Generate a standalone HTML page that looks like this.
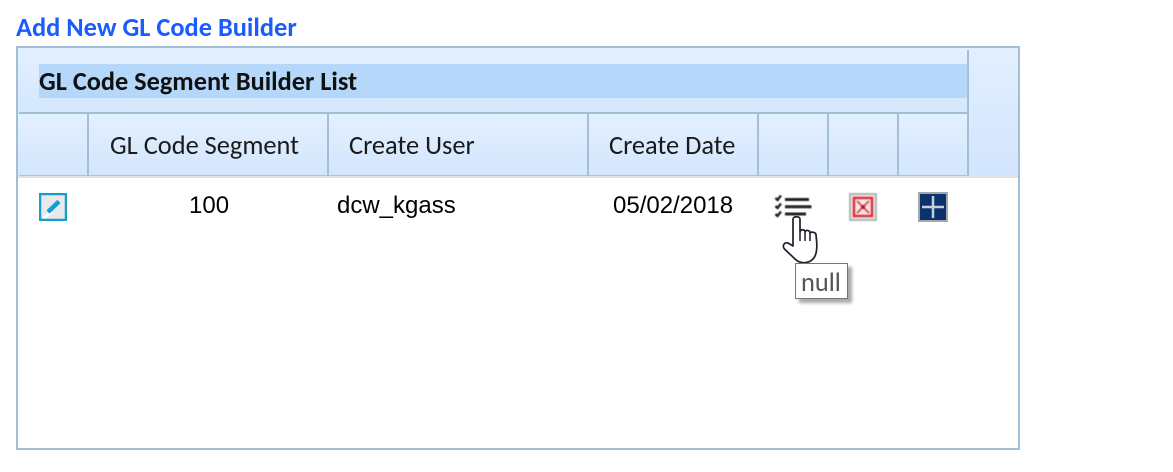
<!DOCTYPE html>
<html><head><meta charset="utf-8">
<style>
html,body{margin:0;padding:0;background:#fff;width:1173px;height:472px;overflow:hidden}
body{position:relative;font-family:"Carlito","Liberation Sans",sans-serif}
.a{position:absolute}
.t{position:absolute;white-space:nowrap;line-height:1}
.v{position:absolute;background:#a3bfd6;width:2px;top:113px;height:63px}
.h{font-size:26.4px;color:#1a1a1a;top:133px}
.c{font-family:"Liberation Sans",sans-serif;font-size:24px;color:#000;top:194px}
</style></head><body>
<div class="t" style="left:16px;top:15px;font-size:26.400px;font-weight:bold;color:#1a5cff">Add New GL Code Builder</div>

<div class="a" style="left:16px;top:46px;width:1000px;height:400px;border:2px solid #a3bfd6;background:#fff"></div>
<div class="a" style="left:18px;top:48px;width:1000px;height:128px;background:linear-gradient(#e2efff,#d2e5fd)"></div>
<div class="a" style="left:18px;top:48px;width:950px;height:64px;background:linear-gradient(#e3f0ff,#d5e7fe)"></div>
<div class="a" style="left:18px;top:114px;width:950px;height:61px;background:linear-gradient(#e3f0ff,#d3e6fd)"></div>
<div class="a" style="left:18px;top:176px;width:1000px;height:2px;background:#e0e0e0"></div>

<div class="a" style="left:39px;top:64px;width:928px;height:34px;background:#b4d7fa"></div>
<div class="t" style="left:39px;top:69px;font-size:26.300px;font-weight:bold;color:#111">GL Code Segment Builder List</div>

<div class="a" style="left:967px;top:50px;width:2px;height:126px;background:#a3bfd6"></div>
<div class="a" style="left:19px;top:112px;width:949px;height:2px;background:#a3bfd6"></div>
<div class="a" style="left:19px;top:175px;width:949px;height:1px;background:#a9c5dc"></div>
<div class="v" style="left:87px"></div>
<div class="v" style="left:327px"></div>
<div class="v" style="left:587px"></div>
<div class="v" style="left:757px"></div>
<div class="v" style="left:827px"></div>
<div class="v" style="left:897px"></div>

<div class="t h" style="left:110px">GL Code Segment</div>
<div class="t h" style="left:349px">Create User</div>
<div class="t h" style="left:609px">Create Date</div>

<div class="t c" style="left:189px">100</div>
<div class="t c" style="left:337px">dcw_kgass</div>
<div class="t c" style="left:613px">05/02/2018</div>

<svg class="a" style="left:39px;top:193px" width="28" height="28" viewBox="0 0 28 28">
<rect x="1" y="1" width="26" height="26" fill="#e9e9e9" stroke="#12a0cc" stroke-width="2.500"/>
<path d="M3 25 L11 18 L14 20 L7 25 Z" fill="#fff"/>
<path d="M9 19 L20 8.500" stroke="#10a0d8" stroke-width="4.500" fill="none" style="filter:blur(.3px)"/>
</svg>

<svg class="a" style="left:772px;top:192px;filter:blur(.6px)" width="42" height="30" viewBox="0 0 42 30">
<g fill="none" stroke="#222" stroke-linecap="butt">
<path d="M3.500 6 L5.500 8 L9 3.500" stroke-width="2.400"/>
<path d="M3.500 14 L5.500 16 L9 11.500" stroke-width="2.400"/>
<path d="M3.500 22 L5.500 24 L9 19.500" stroke-width="2.400"/>
<path d="M13 7.500 H37" stroke-width="3"/>
<path d="M13 14.700 H39.500" stroke-width="3"/>
<path d="M13 22 H34" stroke-width="3"/>
</g>
</svg>

<svg class="a" style="left:849px;top:193px;filter:blur(.4px)" width="28" height="28" viewBox="0 0 28 28">
<rect x="0" y="0" width="28" height="28" fill="#b5b5b5"/>
<rect x="2" y="2" width="24" height="24" fill="#e6e6e6"/>
<rect x="5" y="5" width="18" height="18" fill="#f3e6e6" stroke="#dc3038" stroke-width="2.400"/>
<path d="M8 8 L20 20 M20 8 L8 20" stroke="#e0494d" stroke-width="1.800"/>
<circle cx="14" cy="14" r="2" fill="#c91018"/>
</svg>

<svg class="a" style="left:918px;top:192px;filter:blur(.3px)" width="30" height="30" viewBox="0 0 30 30">
<rect width="30" height="30" fill="#a3a8ae"/>
<rect x="2" y="2" width="26" height="26" fill="#0c326b"/>
<path d="M15 4 V26 M4 15 H26" stroke="#c2cfdf" stroke-width="2.500"/>
</svg>

<svg class="a" style="left:780px;top:214px" width="42" height="52" viewBox="0 0 42 52">
<path d="M13 25 V5 C13 2 20 2 20 5 V18 C20.500 15 25 15 25 18 C25.500 15.500 30 16 30 19 C31 17.500 36 18 36 21 C37 29 38 40 33 45 C28 50 20 50 15 45 L4.500 35 C2 32 4 28 8 29 L13 32 Z" fill="#fff" stroke="#1c2028" stroke-width="1.700" stroke-linejoin="round"/>
<path d="M20 18 V27 M25 18 V27 M30 19 V27" stroke="#1c2028" stroke-width="1.500" fill="none"/>
</svg>

<div class="a" style="left:795px;top:263px;width:51px;height:34px;border:1px solid #777;background:#fff;box-shadow:4px 4px 3px #aaa"></div>
<div class="t" style="left:801px;top:270px;font-size:26.400px;color:#555">null</div>
</body></html>
